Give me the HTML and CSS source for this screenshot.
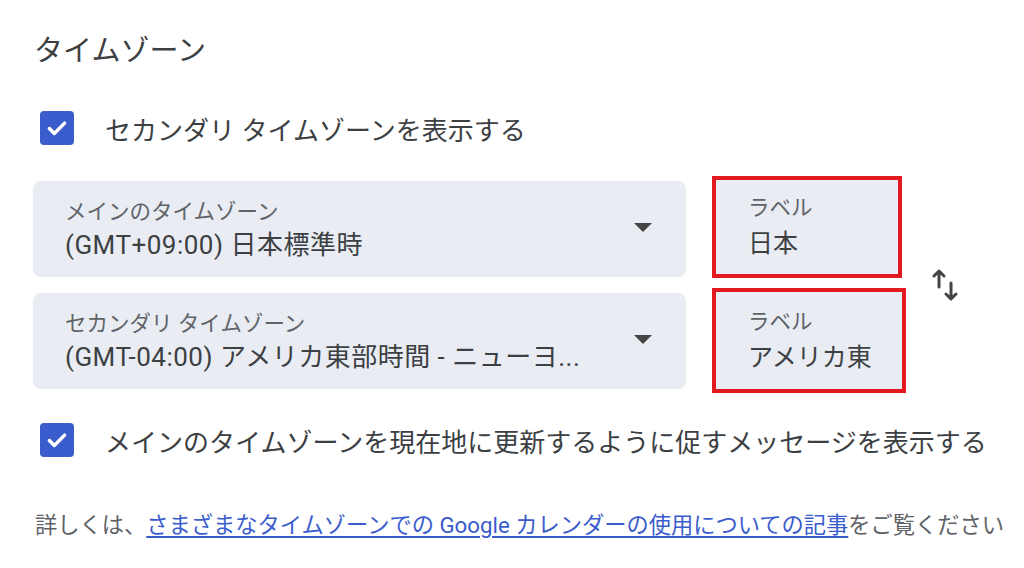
FILE: index.html
```html
<!DOCTYPE html>
<html lang="ja">

<head>
    <meta name="viewport" content="width=device-width, minimum-scale=1">
    <title>タイムゾーン</title>
    <link rel="stylesheet" href="styles.css">
</head>

<body>
    <div class="settings">
        <h2 class="title">タイムゾーン</h2>

        <label class="check-row">
            <span class="checkbox">
                <svg viewBox="0 0 24 24" width="26" height="26"><path d="M5 12.5l4.5 4.5L19 7.5" /></svg>
            </span>
            <span class="check-text">セカンダリ タイムゾーンを表示する</span>
        </label>

        <div class="zones">
            <div class="select">
                <div class="select-text">
                    <span class="select-label">メインのタイムゾーン</span>
                    <span class="select-value">(GMT+09:00) 日本標準時</span>
                </div>
                <span class="caret"></span>
            </div>
            <div class="label-field">
                <span class="select-label">ラベル</span>
                <span class="select-value">日本</span>
            </div>
            <button class="swap" aria-label="入れ替え">
                <svg viewBox="0 0 26 34" width="26" height="34">
                    <path d="M7 19V3M2 8l5-5 5 5" />
                    <path d="M19 15v16M14 26l5 5 5-5" />
                </svg>
            </button>

            <div class="select">
                <div class="select-text">
                    <span class="select-label">セカンダリ タイムゾーン</span>
                    <span class="select-value">(GMT-04:00) アメリカ東部時間 - ニューヨ...</span>
                </div>
                <span class="caret"></span>
            </div>
            <div class="label-field label-field-wide">
                <span class="select-label">ラベル</span>
                <span class="select-value">アメリカ東</span>
            </div>
        </div>

        <label class="check-row check-row-second">
            <span class="checkbox">
                <svg viewBox="0 0 24 24" width="26" height="26"><path d="M5 12.5l4.5 4.5L19 7.5" /></svg>
            </span>
            <span class="check-text">メインのタイムゾーンを現在地に更新するように促すメッセージを表示する</span>
        </label>

        <p class="help">詳しくは、<a href="#">さまざまなタイムゾーンでの Google カレンダーの使用についての記事</a>をご覧ください</p>
    </div>
</body>

</html>
```

FILE: styles.css
```css
:root {
    --text: #3c4043;
    --muted: #5f6368;
    --field: #e9edf3;
    --primary: #3a5ccc;
    --mark: #e21a1f;
}

* {
    box-sizing: border-box;
    padding: 0;
    margin: 0;
}

body {
    background: #fff;
    color: var(--text);
    font-family: Roboto, "Noto Sans CJK JP", sans-serif;
}

.settings {
    padding: 31px 0 0 33px;
}

.title {
    font-size: 29px;
    font-weight: 400;
    line-height: 40px;
    color: var(--text);
    padding-left: 1px;
}

.check-row {
    display: flex;
    align-items: center;
    gap: 31px;
    margin-top: 40px;
    padding-left: 7px;
    height: 34px;
}

.checkbox {
    flex: none;
    width: 34px;
    height: 34px;
    border-radius: 4px;
    background: var(--primary);
    display: flex;
    align-items: center;
    justify-content: center;
}

.checkbox svg {
    fill: none;
    stroke: #fff;
    stroke-width: 3.2;
    stroke-linecap: round;
    stroke-linejoin: round;
}

.check-text {
    font-size: 26px;
    color: var(--text);
    white-space: nowrap;
}

.zones {
    display: grid;
    grid-template-columns: 653px 194px 60px;
    grid-template-rows: 96px 96px;
    column-gap: 26px;
    row-gap: 16px;
    margin-top: 36px;
}

.select {
    background: var(--field);
    border-radius: 8px;
    display: flex;
    align-items: center;
    padding: 0 34px 0 32px;
}

.select-text {
    flex: 1;
    display: flex;
    flex-direction: column;
    gap: 1px;
}

.select-label {
    font-size: 21.5px;
    color: var(--muted);
    line-height: 30px;
}

.select-value {
    font-size: 26px;
    color: var(--text);
    line-height: 34px;
    white-space: nowrap;
    letter-spacing: 0.5px;
}

.caret {
    flex: none;
    width: 0;
    height: 0;
    border-left: 9px solid transparent;
    border-right: 9px solid transparent;
    border-top: 9px solid #444;
    margin-top: -4px;
}

.label-field {
    background: var(--field);
    border: 4px solid var(--mark);
    width: 190px;
    height: 102px;
    margin-top: -5px;
    display: flex;
    flex-direction: column;
    justify-content: center;
    gap: 4px;
    padding-left: 32px;
}

.label-field .select-value {
    font-size: 25px;
    letter-spacing: 0;
}

.label-field-wide {
    width: 194px;
    height: 105px;
}

.swap {
    grid-row: 1 / 3;
    grid-column: 3;
    align-self: center;
    justify-self: start;
    background: none;
    border: none;
    width: 26px;
    height: 34px;
}

.swap svg {
    fill: none;
    stroke: #444;
    stroke-width: 3;
    stroke-linecap: round;
    stroke-linejoin: round;
}

.check-row-second {
    margin-top: 34px;
}

.help {
    margin-top: 50px;
    padding-left: 2px;
    font-size: 22.25px;
    color: var(--muted);
    white-space: nowrap;
}

.help a {
    color: var(--primary);
    text-decoration: underline;
    text-underline-offset: 3px;
}
```
